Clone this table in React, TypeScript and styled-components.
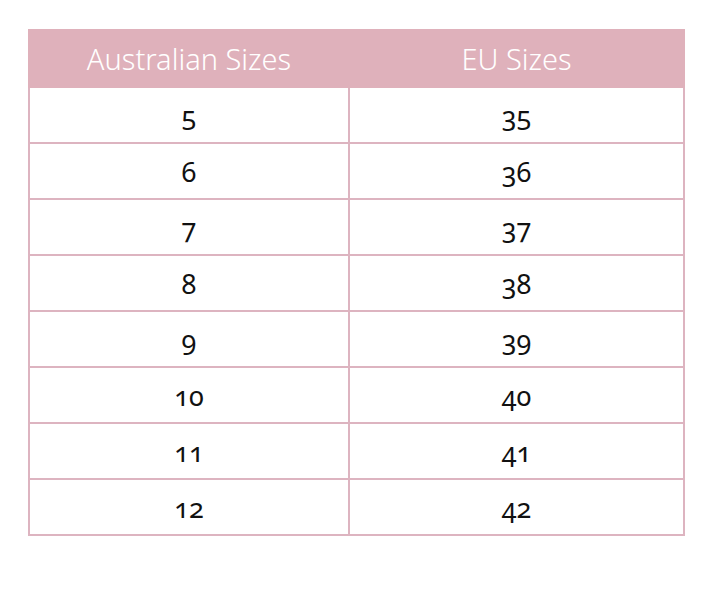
import styled, { createGlobalStyle } from "styled-components";

const GlobalStyle = createGlobalStyle`
  body {
    margin: 0;
    background: #ffffff;
  }
`;

const Page = styled.div`
  padding: 29px 0 0 28px;
`;

const SizeTable = styled.table`
  width: 657px;
  border-collapse: collapse;
  table-layout: fixed;
  font-family: "Noto Sans", "Open Sans", sans-serif;
  font-variant-numeric: oldstyle-nums;
`;

const HeadCell = styled.th<{ $width?: number }>`
  width: ${({ $width }) => ($width ? `${$width}px` : "auto")};
  height: 55px;
  padding: 0;
  background: #dfb1bb;
  color: #ffffff;
  font-weight: 300;
  font-size: 29px;
  text-align: center;
  border: 2px solid #dfb1bb;
`;

const Cell = styled.td`
  height: 53px;
  padding: 1px 0 0;
  text-align: center;
  color: #111111;
  font-size: 27px;
  font-weight: 400;
  border: 2px solid #ddb4c0;
`;

const sizes: Array<[number, number]> = [
  [5, 35],
  [6, 36],
  [7, 37],
  [8, 38],
  [9, 39],
  [10, 40],
  [11, 41],
  [12, 42],
];

export default function App() {
  return (
    <Page>
      <GlobalStyle />
      <SizeTable>
        <thead>
          <tr>
            <HeadCell $width={318}>Australian Sizes</HeadCell>
            <HeadCell>EU Sizes</HeadCell>
          </tr>
        </thead>
        <tbody>
          {sizes.map(([au, eu]) => (
            <tr key={au}>
              <Cell>{au}</Cell>
              <Cell>{eu}</Cell>
            </tr>
          ))}
        </tbody>
      </SizeTable>
    </Page>
  );
}
